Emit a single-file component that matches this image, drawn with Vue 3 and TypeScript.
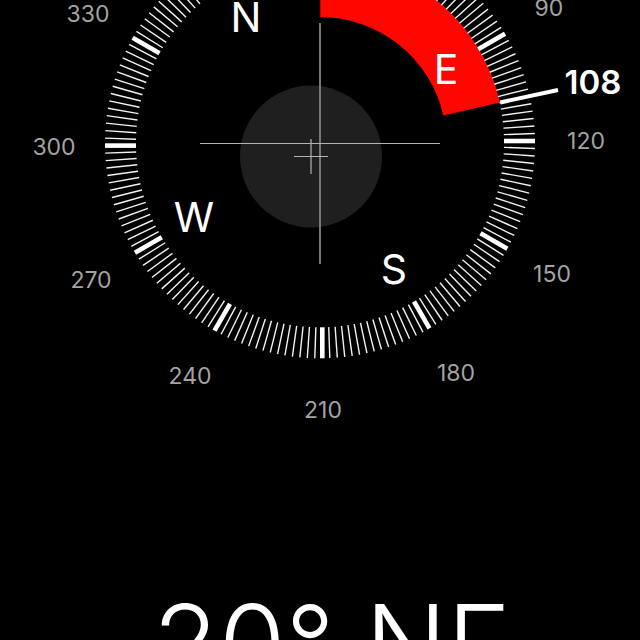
<script setup lang="ts">
interface Tick { angle: number; major: boolean }
interface Mark { text: string; x: number; y: number }

const cx = 320
const cy = 143

const ticks: Tick[] = Array.from({ length: 180 }, (_, i) => ({
  angle: i * 2,
  major: i % 15 === 0,
}))

// Places a label on a ring; angle 0 points right and grows clockwise.
function place(text: string, angle: number, radius: number, shift: number): Mark {
  const a = (angle * Math.PI) / 180
  return {
    text,
    x: Math.round(cx + radius * Math.cos(a) + shift * Math.sin(a)),
    y: Math.round(cy + radius * Math.sin(a) - shift * Math.cos(a)),
  }
}

const degrees: Mark[] = [90, 120, 150, 180, 210, 240, 270, 300, 330].map((d) =>
  place(String(d), d - 120, 266, 3),
)

const directions: Mark[] = ['E', 'S', 'W', 'N'].map((d, i) => place(d, i * 90 - 30.5, 146, 0))
</script>

<template>
  <main class="compass">
    <svg class="dial" viewBox="0 0 640 560" role="img" aria-label="Compass dial">
      <path class="arc" d="M320.3 -41.5 A184.5 184.5 0 0 1 500 102.5 L443.3 115.5 A126.5 126.5 0 0 0 320.3 17 Z" />
      <circle class="level" cx="311" cy="156.5" r="71" />
      <path class="hair wide" d="M320 23V264M311 139V174" />
      <path class="hair" d="M200 143.5H440M294 156.5H328" />
      <g transform="translate(320 143.3)">
        <line
          v-for="t in ticks"
          :key="t.angle"
          :class="['tick', { major: t.major }]"
          x1="184"
          y1="-2.3"
          x2="215"
          y2="-2.3"
          :transform="`rotate(${t.angle})`"
        />
      </g>
      <path class="needle" d="M500.2 102.5L558 90" />
      <text v-for="m in degrees" :key="m.text" class="degree" :x="m.x" :y="m.y + 9">{{ m.text }}</text>
      <text v-for="m in directions" :key="m.text" class="direction" :x="m.x" :y="m.y + 15">{{ m.text }}</text>
      <text class="bearing" x="593" y="94">108</text>
    </svg>
    <h1 class="heading">20° NE</h1>
  </main>
</template>

<style>
body {
  background: #000;
}
</style>

<style scoped>
.compass {
  height: 100vh;
  overflow: hidden;
  background: #000;
  color: #fff;
  font-family: Inter, Roboto, sans-serif;
}
.dial {
  display: block;
  width: 100%;
}
.arc {
  fill: #ff0600;
}
.level {
  fill: #1f1f1f;
}
.hair {
  fill: none;
  stroke: #b4b4b4;
  stroke-width: 1;
}
.hair.wide {
  stroke: #777;
  stroke-width: 2;
}
.tick {
  stroke: #f2f2f2;
  stroke-width: 1.4;
}
.tick.major {
  stroke: #fff;
  stroke-width: 4.6;
}
.needle {
  stroke: #fff;
  stroke-width: 4;
}
text {
  text-anchor: middle;
}
.degree {
  fill: #a3a3a3;
  font-size: 23px;
}
.direction {
  fill: #fff;
  font-size: 41px;
}
.bearing {
  fill: #fff;
  font-size: 33px;
  font-weight: 600;
}
.heading {
  margin: 0;
  padding-top: 16px;
  padding-left: 24px;
  text-align: center;
  font-size: 108px;
  line-height: 136px;
  font-weight: 300;
  white-space: nowrap;
}
</style>
